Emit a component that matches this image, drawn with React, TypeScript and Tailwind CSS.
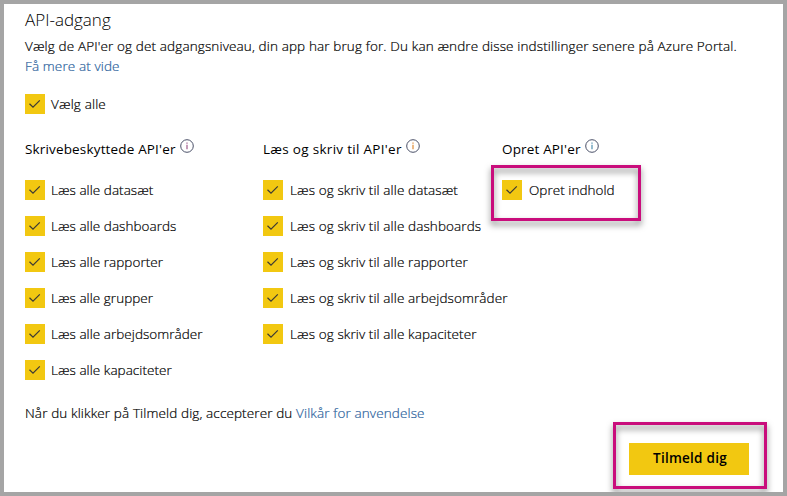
import React from "react";

const readApis = [
  "Læs alle datasæt",
  "Læs alle dashboards",
  "Læs alle rapporter",
  "Læs alle grupper",
  "Læs alle arbejdsområder",
  "Læs alle kapaciteter",
];
const writeApis = [
  "Læs og skriv til alle datasæt",
  "Læs og skriv til alle dashboards",
  "Læs og skriv til alle rapporter",
  "Læs og skriv til alle arbejdsområder",
  "Læs og skriv til alle kapaciteter",
];

function Check({ label, gap = "gap-1.5 tracking-[0.04px]" }: { label: string; gap?: string }) {
  return (
    <label className={`flex h-5 items-center whitespace-nowrap ${gap}`}>
      <span className="block h-5 w-5 shrink-0 bg-[#f2c811]">
        <svg viewBox="0 0 20 20" className="block h-5 w-5" fill="none" stroke="#3c3a35" strokeWidth="1.2">
          <path d="M4.5 9.8 8 13.2 14.8 6.4" />
        </svg>
      </span>
      <span>{label}</span>
    </label>
  );
}

function Info({ color }: { color: string }) {
  return (
    <svg viewBox="0 0 14 14" className="mb-[6px] h-3.5 w-3.5 shrink-0" fill="none" stroke={color}>
      <circle cx="7" cy="7" r="6.3" stroke="#4a5068" strokeWidth="1" />
      <path d="M7 5.7v4.6M7 3.5v1.2" strokeWidth="1.2" />
    </svg>
  );
}

type ColumnProps = {
  title: string;
  items: string[];
  width: string;
  color: string;
  gap?: string;
  tracking: string;
};

function Column({ title, items, width, color, gap, tracking }: ColumnProps) {
  return (
    <section className={width}>
      <h2 className={`flex h-5 items-center gap-1 whitespace-nowrap font-normal text-black [-webkit-text-stroke:0px] ${tracking}`}>
        {title}
        <Info color={color} />
      </h2>
      <div className="mt-[21px] flex flex-col gap-4">
        {items.map((t) => (
          <Check key={t} label={t} gap={gap} />
        ))}
      </div>
    </section>
  );
}

export default function App() {
  return (
    <main className="relative h-[496px] w-[787px] overflow-hidden border-4 border-[#a5a5a5] bg-white pl-[21px] font-['Open_Sans',sans-serif] text-[13.5px] leading-5 font-light text-black [-webkit-text-stroke:0.2px]">
      <h1 className="mt-1 h-6 text-[17px] leading-[23px] font-light [-webkit-text-stroke:0px]">API-adgang</h1>
      <p className="mt-1 tracking-[0.13px] whitespace-nowrap">
        Vælg de API'er og det adgangsniveau, din app har brug for. Du kan ændre disse indstillinger senere på Azure Portal.
      </p>
      <a className="block w-fit tracking-[0.12px] text-[#2b629c]">Få mere at vide</a>
      <div className="mt-[18px]">
        <Check label="Vælg alle" gap="gap-1.5 tracking-[0.15px]" />
      </div>
      <div className="mt-[25px] flex">
        <Column title="Skrivebeskyttede API'er" items={readApis} width="w-[238px]" color="#a05a8c" tracking="tracking-[0.16px]" />
        <Column
          title="Læs og skriv til API'er"
          items={writeApis}
          width="w-[239px]"
          color="#e08a35"
          gap="gap-[7px] tracking-[0.1px]"
          tracking="tracking-[0.3px]"
        />
        <Column
          title="Opret API'er"
          items={["Opret indhold"]}
          width="w-[200px]"
          color="#5090b0"
          gap="gap-[7px] tracking-[0.04px]"
          tracking="tracking-[0.16px]"
        />
      </div>
      <p className="mt-[23px] tracking-[0.12px] whitespace-nowrap">
        Når du klikker på Tilmeld dig, accepterer du <a className="text-[#2b629c]">Vilkår for anvendelse</a>
      </p>
      <button className="mt-5 ml-[604px] block h-8 w-[120px] bg-[#f2c811] pb-0.5 pl-0.5 text-[13.5px] font-semibold tracking-[0.25px] text-black [-webkit-text-stroke:0px]">
        Tilmeld dig
      </button>
      <div className="absolute top-[161px] left-[487px] h-14 w-[150px] border-3 border-[#c90d7c] drop-shadow-[0_4px_3px_rgba(0,0,0,0.5)]" />
      <div className="absolute top-[418px] left-[609px] h-[67px] w-[154px] border-3 border-[#c90d7c] drop-shadow-[0_4px_3px_rgba(0,0,0,0.5)]" />
    </main>
  );
}
